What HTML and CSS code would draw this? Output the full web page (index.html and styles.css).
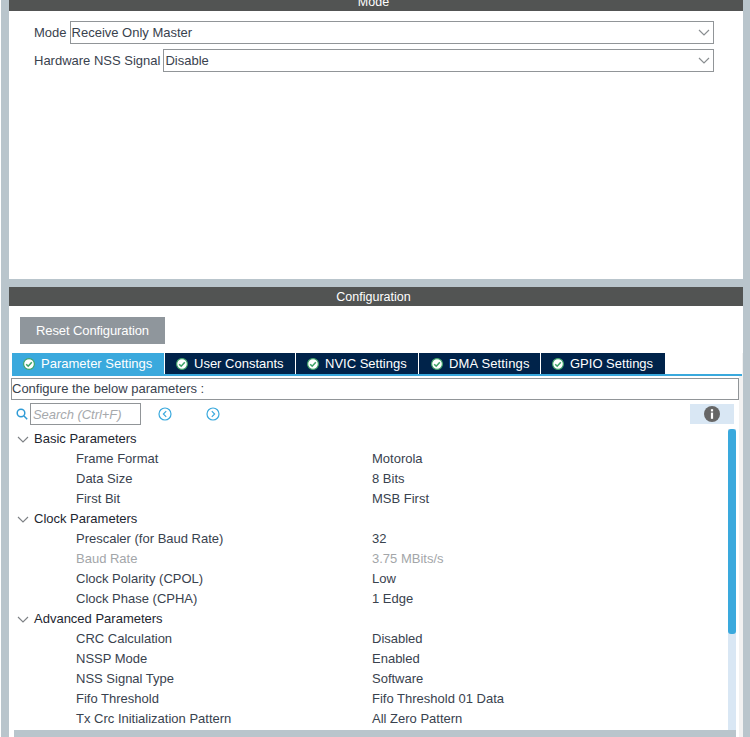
FILE: index.html
```html
<!DOCTYPE html>
<html lang="en">
<head>
<meta charset="utf-8">
<title>SPI Configuration</title>
<link rel="stylesheet" href="styles.css">
</head>
<body>
<div class="screen">
  <section class="panel mode-panel">
    <div class="bar bar-cut">Mode</div>
    <div class="mode-body">
      <div class="field">
        <label class="field-label">Mode</label>
        <div class="select">Receive Only Master
          <svg class="caret" viewBox="0 0 12 7"><path d="M1 1l5 5 5-5"/></svg>
        </div>
      </div>
      <div class="field">
        <label class="field-label">Hardware NSS Signal</label>
        <div class="select">Disable
          <svg class="caret" viewBox="0 0 12 7"><path d="M1 1l5 5 5-5"/></svg>
        </div>
      </div>
    </div>
  </section>
  <section class="panel config-panel">
    <div class="bar">Configuration</div>
    <div class="reset-row"><button class="reset">Reset Configuration</button></div>
    <div class="tabs">
      <div class="tab tab-active"><svg class="ok" viewBox="0 0 12 12"><circle cx="6" cy="6" r="5.4"/><path d="M3.2 6.2l2 2 3.6-4"/></svg>Parameter Settings</div>
      <div class="tab tab-user"><svg class="ok" viewBox="0 0 12 12"><circle cx="6" cy="6" r="5.4"/><path d="M3.2 6.2l2 2 3.6-4"/></svg>User Constants</div>
      <div class="tab tab-nvic"><svg class="ok" viewBox="0 0 12 12"><circle cx="6" cy="6" r="5.4"/><path d="M3.2 6.2l2 2 3.6-4"/></svg>NVIC Settings</div>
      <div class="tab tab-dma"><svg class="ok" viewBox="0 0 12 12"><circle cx="6" cy="6" r="5.4"/><path d="M3.2 6.2l2 2 3.6-4"/></svg>DMA Settings</div>
      <div class="tab tab-gpio"><svg class="ok" viewBox="0 0 12 12"><circle cx="6" cy="6" r="5.4"/><path d="M3.2 6.2l2 2 3.6-4"/></svg>GPIO Settings</div>
    </div>
    <div class="hint">Configure the below parameters :</div>
    <div class="tools">
      <svg class="glass" viewBox="0 0 12 12"><circle cx="5" cy="5" r="3.8"/><path d="M8 8l3.2 3.2"/></svg>
      <div class="search">Search (Ctrl+F)</div>
      <svg class="nav nav-prev" viewBox="0 0 14 14"><circle cx="7" cy="7" r="6"/><path d="M8.2 4.2L5.4 7l2.8 2.8"/></svg>
      <svg class="nav nav-next" viewBox="0 0 14 14"><circle cx="7" cy="7" r="6"/><path d="M5.8 4.2L8.6 7l-2.8 2.8"/></svg>
      <div class="info"><svg class="info-icon" viewBox="0 0 16 16"><circle cx="8" cy="8" r="8"/><rect x="6.9" y="6.6" width="2.2" height="6.2"/><rect x="6.9" y="3.2" width="2.2" height="2.2"/></svg></div>
    </div>
    <div class="params">
      <div class="tree">
        <div class="group"><svg class="fold" viewBox="0 0 12 7"><path d="M1 1l5 5 5-5"/></svg>Basic Parameters</div>
        <div class="row"><span class="name">Frame Format</span><span>Motorola</span></div>
        <div class="row"><span class="name">Data Size</span><span>8 Bits</span></div>
        <div class="row"><span class="name">First Bit</span><span>MSB First</span></div>
        <div class="group"><svg class="fold" viewBox="0 0 12 7"><path d="M1 1l5 5 5-5"/></svg>Clock Parameters</div>
        <div class="row"><span class="name">Prescaler (for Baud Rate)</span><span>32</span></div>
        <div class="row row-off"><span class="name">Baud Rate</span><span>3.75 MBits/s</span></div>
        <div class="row"><span class="name">Clock Polarity (CPOL)</span><span>Low</span></div>
        <div class="row"><span class="name">Clock Phase (CPHA)</span><span>1 Edge</span></div>
        <div class="group"><svg class="fold" viewBox="0 0 12 7"><path d="M1 1l5 5 5-5"/></svg>Advanced Parameters</div>
        <div class="row"><span class="name">CRC Calculation</span><span>Disabled</span></div>
        <div class="row"><span class="name">NSSP Mode</span><span>Enabled</span></div>
        <div class="row"><span class="name">NSS Signal Type</span><span>Software</span></div>
        <div class="row"><span class="name">Fifo Threshold</span><span>Fifo Threshold 01 Data</span></div>
        <div class="row"><span class="name">Tx Crc Initialization Pattern</span><span>All Zero Pattern</span></div>
      </div>
      <div class="scrollbar"><div class="thumb"></div></div>
    </div>
    <div class="hscroll"></div>
  </section>
</div>
</body>
</html>
```
FILE: styles.css
```css
* { box-sizing: border-box; }
html, body { margin: 0; padding: 0; background: #fff; }
.screen {
  height: 737px; overflow: hidden;
  margin-left: 1px; padding: 0 7px 0 8px;
  width: 749px;
  background: #b9c5cc;
  display: flex; flex-direction: column; gap: 8px;
  font: 13px "Liberation Sans", Arial, sans-serif;
  color: #39424e;
}
.panel { background: #fff; display: flex; flex-direction: column; }
.mode-panel { height: 279px; flex: none; }
.config-panel {
  flex: 1; min-height: 0;
  background: linear-gradient(to left, #f2f2f2 4px, #fff 4px);
}
.bar {
  height: 19px; flex: none; background: #525453; color: #fff;
  text-align: center; line-height: 20px; overflow: hidden;
  padding-right: 5px; font-size: 12.5px;
}
.bar-cut { height: 11px; line-height: 5px; }
.mode-body { padding: 10px 29px 0 25px; display: flex; flex-direction: column; gap: 5px; }
.field { display: flex; align-items: center; gap: 3px; height: 23px; }
.field-label { white-space: nowrap; }
.select {
  flex: 1; height: 23px; border: 1px solid #919598; padding-left: 1px;
  line-height: 21px; display: flex; justify-content: space-between; align-items: center;
}
.caret { width: 12px; height: 7px; margin-right: 3px; fill: none; stroke: #8a8e91; stroke-width: 1.2; }
.reset-row { padding: 11px 0 0 11px; height: 47px; flex: none; background: #fff; }
.reset {
  width: 145px; height: 27px; border: 0; background: #8f969c; color: #fff;
  font: 13px "Liberation Sans", Arial, sans-serif; letter-spacing: -.1px; padding: 0;
}
.tabs {
  display: flex; margin: 0 1px 0 3px; height: 23px; flex: none;
  border-bottom: 2px solid #3aa9dd; gap: 1px; color: #fff; background: #fff;
}
.tab {
  background: #00234a; height: 21px; display: flex; align-items: center;
  white-space: nowrap;
}
.tab-active { background: #3aa9dd; width: 152px; padding-left: 11px; }
.tab-user { width: 130px; padding-left: 11px; }
.tab-nvic { width: 122px; padding-left: 11px; }
.tab-dma { width: 121px; padding-left: 12px; letter-spacing: .15px; }
.tab-gpio { width: 124px; padding-left: 11px; }
.ok { width: 12px; height: 12px; margin-right: 6px; flex: none; }
.ok circle { fill: #fff; stroke: #3fa469; stroke-width: 1.2; }
.ok path { fill: none; stroke: #3fa469; stroke-width: 1.6; }
.hint {
  margin: 2px 4px 0 2px; height: 22px; flex: none; border: 1px solid #919598;
  line-height: 20px; padding-left: 0; background: #fff;
}
.tools { display: flex; align-items: center; height: 26px; flex: none; padding-left: 7px; margin-top: 1px; }
.glass { width: 12px; height: 12px; fill: none; stroke: #2f9bd6; stroke-width: 1.5; flex: none; }
.search {
  width: 111px; height: 22px; margin-left: 2px; border: 1px solid #919598; color: #a6a9ac;
  font-style: italic; line-height: 22px; padding-left: 2px; letter-spacing: -.05px;
}
.nav { width: 14px; height: 14px; fill: none; stroke: #3aa9dd; stroke-width: 1.2; flex: none; }
.nav-prev { margin-left: 17px; }
.nav-next { margin-left: 34px; }
.info { width: 44px; height: 20px; margin-left: 470px; background: #d9e7f4; display: flex; align-items: center; justify-content: center; }
.info-icon { width: 16px; height: 16px; }
.info-icon circle { fill: #666; }
.info-icon rect { fill: #fff; }
.params { flex: 1; min-height: 0; display: flex; padding-right: 7px; margin-top: 2px; }
.tree { flex: 1; min-width: 0; overflow: hidden; padding-left: 8px; }
.group { height: 20px; line-height: 20px; color: #1d2630; display: flex; align-items: center; }
.fold { width: 12px; height: 7px; margin-right: 5px; fill: none; stroke: #7d8185; stroke-width: 1.1; flex: none; }
.row { height: 20px; line-height: 20px; display: flex; padding-left: 59px; }
.name { width: 296px; flex: none; }
.row-off { color: #a3a6a9; }
.scrollbar { width: 8px; background: #d9e7f4; flex: none; }
.thumb { height: 205px; background: #3aa9dd; border-radius: 3px; }
.hscroll { height: 7px; margin: 0 7px 0 5px; background: #b9c5cc; flex: none; }
```
